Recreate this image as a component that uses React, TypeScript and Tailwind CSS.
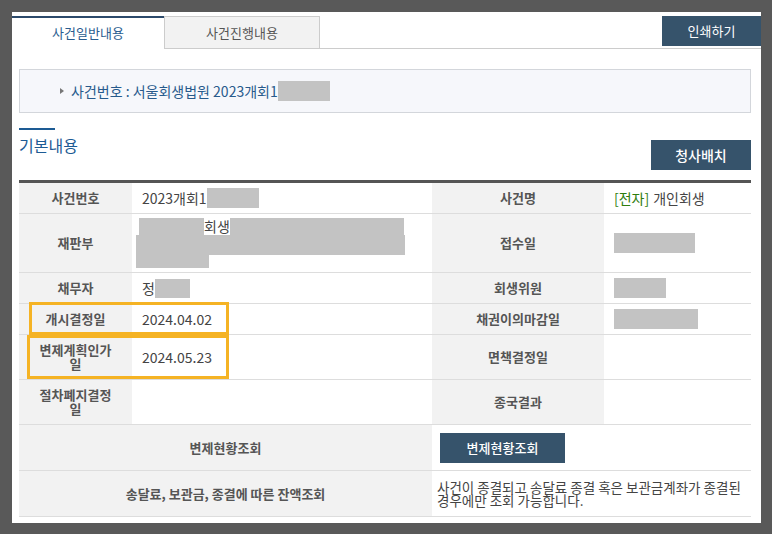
const FONT = "font-['Noto_Sans_CJK_KR','Noto_Sans',sans-serif]";

function Redact({ w, h }: { w: number; h: number }) {
  return <span className="inline-block bg-[#c3c3c3] align-middle" style={{ width: w, height: h }} />;
}

function Label({ children, span = false }: { children: React.ReactNode; span?: boolean }) {
  return (
    <div
      className={`flex items-center justify-center bg-[#f2f2f2] px-[16px] text-center text-[13px] font-bold leading-[14px] text-[#555] ${
        span ? 'col-span-2' : ''
      }`}
    >
      {children}
    </div>
  );
}

function Value({ children, span = false }: { children?: React.ReactNode; span?: boolean }) {
  return (
    <div className={`flex items-center bg-white pl-[10px] text-[14px] text-[#444] ${span ? 'col-span-2' : ''}`}>
      {children}
    </div>
  );
}

export default function App() {
  return (
    <div className={`h-[534px] w-[772px] overflow-hidden bg-[#595959] pl-[12px] pt-[12px] ${FONT}`}>
      <div className="h-[511px] w-[749px] bg-white pt-[4px]">
        {/* Tabs */}
        <div className="flex items-start">
          <div className="flex h-[32px] w-[152px] items-center justify-center border-t-2 border-[#2c4a6b] text-[13px] text-[#2a5d8f]">
            사건일반내용
          </div>
          <div className="flex h-[33px] flex-1 items-start border-b border-[#cccccc]">
            <div className="flex h-[33px] w-[156px] items-center justify-center border border-[#cccccc] bg-[#f2f2f2] text-[13px] text-[#555]">
              사건진행내용
            </div>
            <div className="flex-1" />
            <button className="h-[30px] w-[99px] bg-[#36536b] text-[13px] text-white">인쇄하기</button>
          </div>
        </div>

        <div className="pl-[7px] pr-[10px]">
          {/* Case number box */}
          <div className="mt-[20px] flex h-[44px] items-center border border-[#d3d6db] bg-[#f6f7fb] pl-[40px]">
            <span className="mr-[7px] h-0 w-0 border-y-[3px] border-l-[4px] border-y-transparent border-l-[#777]" />
            <span className="text-[14px] text-[#275a8c]">사건번호 : 서울회생법원 2023개회1</span>
            <Redact w={52} h={20} />
          </div>

          {/* Section header */}
          <div className="mt-[15px] h-[2px] w-[36px] bg-[#1d5b94]" />
          <div className="flex items-start justify-between">
            <h3 className="mt-[4px] text-[16px] leading-[22px] text-[#1d5b94]">기본내용</h3>
            <button className="mt-[10px] h-[30px] w-[100px] bg-[#36536b] text-[14px] font-medium text-white">
              청사배치
            </button>
          </div>

          {/* Table */}
          <div className="relative mt-[10px] border-t-[3px] border-[#555]">
            <div className="grid h-[31px] grid-cols-[113px_300px_172px_147px] border-b border-[#dddddd]">
              <Label>사건번호</Label>
              <Value>
                2023개회1
                <Redact w={52} h={20} />
              </Value>
              <Label>사건명</Label>
              <Value>
                <span className="text-[#2e7d0e]">[전자]</span>
                <span className="ml-[4px]">개인회생</span>
              </Value>
            </div>

            <div className="grid h-[59px] grid-cols-[113px_300px_172px_147px] border-b border-[#dddddd]">
              <Label>재판부</Label>
              <div className="flex flex-col justify-center bg-white pl-[4px] text-[14px] text-[#444]">
                <div className="ml-[3px] flex h-[17px] items-center">
                  <Redact w={65} h={17} />
                  <span className="leading-[17px]">회생</span>
                  <Redact w={174} h={17} />
                </div>
                <Redact w={269} h={20} />
                <Redact w={73} h={13} />
              </div>
              <Label>접수일</Label>
              <Value>
                <Redact w={81} h={20} />
              </Value>
            </div>

            <div className="grid h-[31px] grid-cols-[113px_300px_172px_147px] border-b border-[#dddddd]">
              <Label>채무자</Label>
              <Value>
                정
                <Redact w={35} h={19} />
              </Value>
              <Label>회생위원</Label>
              <Value>
                <Redact w={52} h={20} />
              </Value>
            </div>

            <div className="grid h-[31px] grid-cols-[113px_300px_172px_147px] border-b border-[#dddddd]">
              <Label>개시결정일</Label>
              <Value>2024.04.02</Value>
              <Label>채권이의마감일</Label>
              <Value>
                <Redact w={84} h={20} />
              </Value>
            </div>

            <div className="grid h-[45px] grid-cols-[113px_300px_172px_147px] border-b border-[#dddddd]">
              <Label>변제계획인가일</Label>
              <Value>2024.05.23</Value>
              <Label>면책결정일</Label>
              <Value />
            </div>

            <div className="grid h-[45px] grid-cols-[113px_300px_172px_147px] border-b border-[#dddddd]">
              <Label>절차폐지결정일</Label>
              <Value />
              <Label>종국결과</Label>
              <Value />
            </div>

            <div className="grid h-[46px] grid-cols-[113px_300px_172px_147px] border-b border-[#dddddd]">
              <Label span>변제현황조회</Label>
              <div className="col-span-2 flex items-center bg-white pl-[8px]">
                <button className="h-[30px] w-[125px] bg-[#36536b] text-[13px] font-medium text-white">
                  변제현황조회
                </button>
              </div>
            </div>

            <div className="grid h-[46px] grid-cols-[113px_300px_172px_147px] border-b border-[#dddddd]">
              <Label span>송달료, 보관금, 종결에 따른 잔액조회</Label>
              <div className="col-span-2 flex items-center bg-white pl-[5px] pr-[8px] text-[13.5px] leading-[13px] text-[#444]">
                사건이 종결되고 송달료 종결 혹은 보관금계좌가 종결된 경우에만 조회 가능합니다.
              </div>
            </div>

            {/* Highlight boxes */}
            <div className="absolute left-[10px] top-[119px] h-[33px] w-[200px] border-[3px] border-[#f5b324]" />
            <div className="absolute left-[8px] top-[152px] h-[44px] w-[202px] border-[3px] border-[#f5b324]" />
          </div>
        </div>
      </div>
    </div>
  );
}
